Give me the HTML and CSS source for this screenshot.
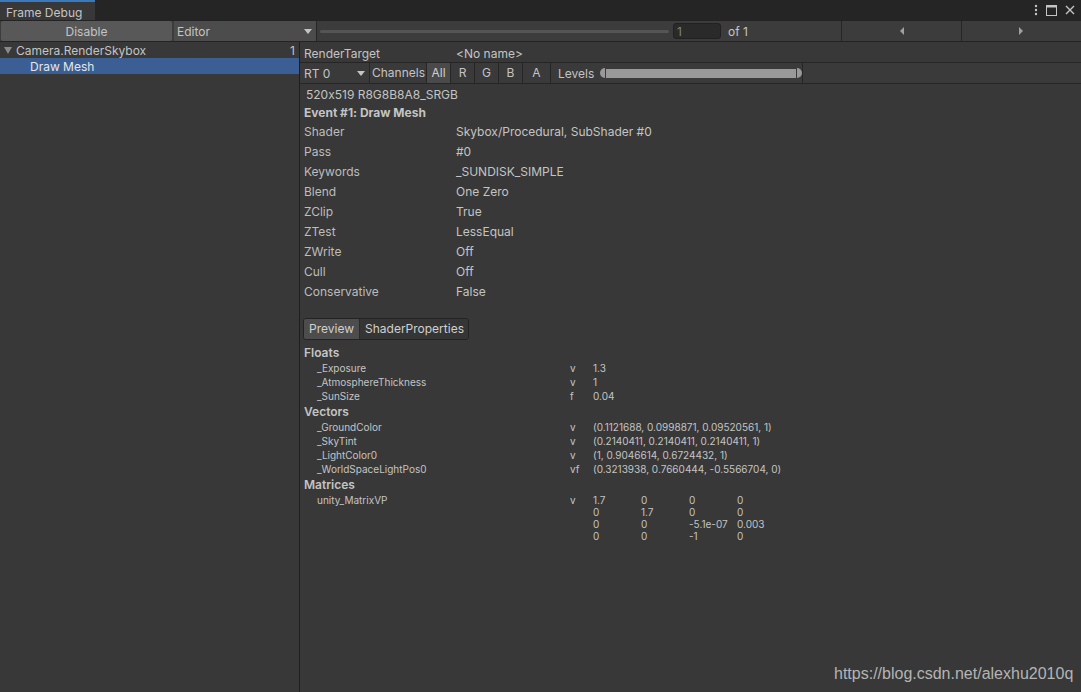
FILE: index.html
```html
<!DOCTYPE html>
<html>
<head>
<meta charset="utf-8">
<link rel="stylesheet" href="styles.css">
</head>
<body>
<div class="window">
  <div class="titlebar">
    <div class="tab">Frame Debug</div>
    <div class="win-icons">
      <svg width="4" height="12" viewBox="0 0 4 12"><circle cx="2" cy="2" r="1.2" fill="#c4c4c4"/><circle cx="2" cy="6" r="1.2" fill="#c4c4c4"/><circle cx="2" cy="10" r="1.2" fill="#c4c4c4"/></svg>
      <svg width="11" height="11" viewBox="0 0 11 11"><rect x="0.5" y="0.5" width="10" height="10" fill="none" stroke="#c4c4c4"/><rect x="0.5" y="0.5" width="10" height="2" fill="#c4c4c4"/></svg>
      <svg width="10" height="10" viewBox="0 0 10 10"><path d="M1 1 L9 9 M9 1 L1 9" stroke="#c4c4c4" stroke-width="1.4"/></svg>
    </div>
  </div>
  <div class="toolbar">
    <div class="btn-disable">Disable</div>
    <div class="dd-editor"><span>Editor</span><span class="caret"></span></div>
    <div class="slider"><div class="track"></div></div>
    <div class="numfield">1</div>
    <div class="of">of 1</div>
    <div class="navbtn"><span class="tri-left"></span></div>
    <div class="navbtn last"><span class="tri-right"></span></div>
  </div>
  <div class="main">
    <div class="left">
      <div class="tree-row"><span class="fold"></span><span class="tree-label">Camera.RenderSkybox</span><span class="count">1</span></div>
      <div class="tree-row selected"><span class="tree-label child">Draw Mesh</span></div>
    </div>
    <div class="splitter"></div>
    <div class="right">
      <div class="rt-row"><span class="lbl">RenderTarget</span><span class="val">&lt;No name&gt;</span></div>
      <div class="rt-bar">
        <div class="rt-dd"><span>RT 0</span><span class="caret"></span></div>
        <div class="chan-label">Channels</div>
        <div class="chan on">All</div>
        <div class="chan">R</div>
        <div class="chan">G</div>
        <div class="chan">B</div>
        <div class="chan a">A</div>
        <div class="levels">
          <span>Levels</span>
          <div class="lvl-bar"><span class="thumb l"></span><span class="fill"></span><span class="thumb r"></span></div>
        </div>
      </div>
      <div class="format">520x519 R8G8B8A8_SRGB</div>
      <div class="event">Event #1: Draw Mesh</div>
      <div class="prop"><span class="lbl">Shader</span><span class="val">Skybox/Procedural, SubShader #0</span></div>
      <div class="prop"><span class="lbl">Pass</span><span class="val">#0</span></div>
      <div class="prop"><span class="lbl">Keywords</span><span class="val">_SUNDISK_SIMPLE</span></div>
      <div class="prop"><span class="lbl">Blend</span><span class="val">One Zero</span></div>
      <div class="prop"><span class="lbl">ZClip</span><span class="val">True</span></div>
      <div class="prop"><span class="lbl">ZTest</span><span class="val">LessEqual</span></div>
      <div class="prop"><span class="lbl">ZWrite</span><span class="val">Off</span></div>
      <div class="prop"><span class="lbl">Cull</span><span class="val">Off</span></div>
      <div class="prop"><span class="lbl">Conservative</span><span class="val">False</span></div>

      <div class="tabs"><div class="tabbtn active">Preview</div><div class="tabbtn">ShaderProperties</div></div>

      <div class="sec-head first">Floats</div>
      <div class="srow"><span class="sname">_Exposure</span><span class="stype">v</span><span class="sval">1.3</span></div>
      <div class="srow"><span class="sname">_AtmosphereThickness</span><span class="stype">v</span><span class="sval">1</span></div>
      <div class="srow"><span class="sname">_SunSize</span><span class="stype">f</span><span class="sval">0.04</span></div>
      <div class="sec-head">Vectors</div>
      <div class="srow"><span class="sname">_GroundColor</span><span class="stype">v</span><span class="sval">(0.1121688, 0.0998871, 0.09520561, 1)</span></div>
      <div class="srow"><span class="sname">_SkyTint</span><span class="stype">v</span><span class="sval">(0.2140411, 0.2140411, 0.2140411, 1)</span></div>
      <div class="srow"><span class="sname">_LightColor0</span><span class="stype">v</span><span class="sval">(1, 0.9046614, 0.6724432, 1)</span></div>
      <div class="srow"><span class="sname">_WorldSpaceLightPos0</span><span class="stype">vf</span><span class="sval">(0.3213938, 0.7660444, -0.5566704, 0)</span></div>
      <div class="sec-head mat">Matrices</div>
      <div class="mrow"><span class="sname">unity_MatrixVP</span><span class="stype">v</span><span class="mc">1.7</span><span class="mc">0</span><span class="mc">0</span><span class="mc">0</span></div>
      <div class="mrow"><span class="sname"></span><span class="stype"></span><span class="mc">0</span><span class="mc">1.7</span><span class="mc">0</span><span class="mc">0</span></div>
      <div class="mrow"><span class="sname"></span><span class="stype"></span><span class="mc">0</span><span class="mc">0</span><span class="mc">-5.1e-07</span><span class="mc">0.003</span></div>
      <div class="mrow"><span class="sname"></span><span class="stype"></span><span class="mc">0</span><span class="mc">0</span><span class="mc">-1</span><span class="mc">0</span></div>
    </div>
  </div>
  <div class="watermark">https://blog.csdn.net/alexhu2010q</div>
</div>
</body>
</html>
```

FILE: styles.css
```css
* { box-sizing: border-box; }
html, body { margin: 0; padding: 0; }
body {
  width: 1081px;
  height: 692px;
  overflow: hidden;
  background: #383838;
  font-family: Inter, "Noto Sans", sans-serif;
  font-feature-settings: "calt" 0;
  font-size: 12px;
  color: #c4c4c4;
}
.window { position: relative; width: 1081px; height: 692px; display: flex; flex-direction: column; }

.titlebar {
  height: 21px;
  background: #252525;
  display: flex;
  align-items: stretch;
  border-bottom: 1px solid #232323;
}
.tab {
  width: 95px;
  background: #383838;
  border-top: 2px solid #3a79bb;
  padding-left: 6px;
  padding-top: 1px;
  line-height: 19px;
  color: #c4c4c4;
}
.win-icons {
  margin-left: auto;
  display: flex;
  align-items: center;
  gap: 8px;
  padding-right: 6px;
}

.toolbar {
  height: 21px;
  background: #3c3c3c;
  border-bottom: 1px solid #232323;
  display: flex;
  align-items: stretch;
}
.btn-disable {
  margin: 0 0 0 1px;
  width: 171px;
  background: #585858;
  text-align: center;
  line-height: 20px;
  padding-top: 1px;
  border-radius: 2px;
}
.dd-editor {
  margin: 0 0 0 2px;
  width: 142px;
  background: #4c4c4c;
  padding: 1px 4px 0 3px;
  display: flex;
  align-items: center;
  justify-content: space-between;
}
.caret {
  width: 0; height: 0;
  border-left: 4px solid transparent;
  border-right: 4px solid transparent;
  border-top: 5px solid #c4c4c4;
}
.slider {
  width: 357px;
  border-left: 1px solid #262626;
  padding: 0 4px 0 3px;
  display: flex;
  align-items: center;
}
.track { height: 3px; width: 100%; background: #555555; border-radius: 2px; }
.numfield {
  margin: 2px 0 2px 0;
  width: 48px;
  background: #2a2a2a;
  border: 1px solid #212121;
  border-radius: 3px;
  padding-left: 3px;
  line-height: 16px;
  color: #808080;
}
.of { width: 120px; padding-left: 7px; padding-top: 1px; line-height: 20px; }
.navbtn {
  width: 120px;
  border-left: 1px solid #262626;
  display: flex;
  align-items: center;
  justify-content: center;
}
.navbtn.last { width: 119px; }
.tri-left { width: 0; height: 0; border-top: 4px solid transparent; border-bottom: 4px solid transparent; border-right: 4px solid #a0a0a0; }
.tri-right { width: 0; height: 0; border-top: 4px solid transparent; border-bottom: 4px solid transparent; border-left: 4px solid #a0a0a0; }

.main { flex: 1; display: flex; }
.left { width: 299px; background: #383838; }
.splitter { width: 1px; background: #1e1e1e; }
.right { flex: 1; }

.tree-row { height: 16px; display: flex; align-items: center; position: relative; }
.fold {
  margin-left: 4px;
  width: 0; height: 0;
  border-left: 4px solid transparent;
  border-right: 4px solid transparent;
  border-top: 7px solid #8a8a8a;
}
.tree-label { margin-left: 4px; }
.tree-label.child { margin-left: 30px; color: #e6e6e6; }
.count { margin-left: auto; margin-right: 4px; }
.tree-row.selected { background: #3b5f95; }

.rt-row {
  height: 21px;
  border-bottom: 1px solid #262626;
  display: flex;
  align-items: center;
  padding-top: 2px;
}
.lbl { width: 156px; padding-left: 4px; flex: none; }

.rt-bar {
  height: 21px;
  background: #3a3a3a;
  border-bottom: 1px solid #262626;
  display: flex;
  align-items: stretch;
}
.rt-dd {
  width: 70px;
  border-right: 1px solid #262626;
  display: flex;
  align-items: center;
  justify-content: space-between;
  padding: 0 4px;
}
.chan-label { width: 57px; border-right: 1px solid #262626; padding-left: 2px; line-height: 20px; }
.chan { width: 24px; border-right: 1px solid #262626; text-align: center; line-height: 20px; }
.chan.on { background: #4a4a4a; color: #d0d0d0; }
.chan.a { width: 28px; }
.levels {
  width: 252px;
  border-right: 1px solid #262626;
  display: flex;
  align-items: center;
  padding-left: 7px;
}
.lvl-bar { margin-left: 6px; display: flex; align-items: center; height: 10px; }
.lvl-bar .fill { width: 190px; height: 9px; background: #999999; }
.thumb { width: 6px; height: 10px; background: #999999; }
.thumb.l { border-radius: 5px 0 0 5px; border-right: 1px solid #3a3a3a; }
.thumb.r { border-radius: 0 5px 5px 0; border-left: 1px solid #3a3a3a; }

.format { height: 18px; line-height: 18px; margin-top: 2px; padding-left: 6px; }
.event { height: 17px; line-height: 18px; padding-left: 4px; font-weight: 700; }
.prop { height: 20px; display: flex; align-items: center; }
.prop .lbl { color: #bdbdbd; }

.tabs {
  margin: 17px 0 0 3px;
  width: 166px;
  height: 22px;
  display: flex;
  border: 1px solid #232323;
  border-radius: 3px;
  overflow: hidden;
}
.tabbtn { line-height: 20px; padding: 0 5px; background: #353535; color: #d0d0d0; }
.tabbtn.active { background: #4d4d4d; width: 56px; border-right: 1px solid #2a2a2a; }

.sec-head { height: 17px; line-height: 17px; padding-left: 4px; font-weight: 600; font-size: 12px; }
.sec-head.first { margin-top: 4px; }
.sec-head.mat { height: 17px; line-height: 16px; margin-top: 1px; }
.srow { height: 14px; display: flex; align-items: center; font-size: 10px; }
.sname { width: 270px; padding-left: 17px; flex: none; }
.stype { width: 23px; flex: none; }
.mrow { height: 12px; display: flex; align-items: center; font-size: 10px; }
.mc { width: 48px; flex: none; }

.watermark {
  position: absolute;
  left: 834px;
  top: 665px;
  font-family: "Liberation Sans", Arial, sans-serif;
  font-size: 16px;
  color: #b4b4b4;
}
```
